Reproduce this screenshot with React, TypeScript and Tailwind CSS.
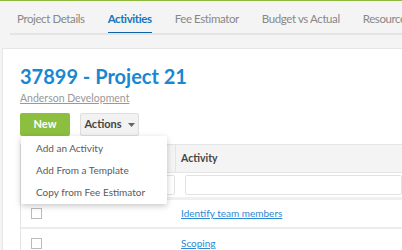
import React from "react";

export default function App() {
  const tabs = ["Project Details", "Activities", "Fee Estimator", "Budget vs Actual", "Resources"];
  return (
    <div className="w-[402px] h-[250px] overflow-hidden bg-[#f4f4f4] relative" style={{ fontFamily: "Lato, 'Liberation Sans', sans-serif" }}>
      <div className="h-[1px] bg-[#8db83a]" />
      <div className="pl-[10px] h-[47px] flex flex-col">
        <div className="flex h-[34px] border-b-2 border-[#e4e4e4] gap-[23px] pl-[7px] overflow-hidden">
          {tabs.map((t, i) => (
            <div key={t} className={`relative shrink-0 whitespace-nowrap text-[11.5px] tracking-[-0.4px] pt-[9px] ${i === 1 ? "text-[#1976b8] font-bold" : "text-[#888]"}`}>
              {t}
              {i === 1 && <div className="absolute left-0 right-0 bottom-[-2px] h-[3px] bg-[#0b65a3]" />}
            </div>
          ))}
        </div>
      </div>
      <div className="ml-[2px] bg-white border-l border-t border-[#e6e6e6] h-[202px] pl-[17px] pt-[14px] relative">
        <div className="text-[20px] leading-[26px] font-bold text-[#1a87d0]">37899 - Project 21</div>
        <div className="text-[10.5px] leading-[14px] text-[#999] underline mt-[2px]">Anderson Development</div>
        <div className="flex gap-[10px] mt-[8px] relative">
          <button className="w-[50px] h-[23px] rounded-[2px] bg-[#8cbf3f] text-white text-[11px] font-bold">New</button>
          <button className="w-[59px] h-[23px] rounded-[2px] bg-[#f2f2f2] border border-[#dedede] text-[#444] text-[11px] font-bold flex items-center justify-center gap-[6px]">
            Actions
            <svg width="7" height="4" viewBox="0 0 7 4"><path d="M0 0 L7 0 L3.5 4 Z" fill="#666" /></svg>
          </button>
          <div className="absolute left-[1px] top-[23px] w-[146px] bg-white rounded-[2px] shadow-[0_2px_6px_rgba(0,0,0,0.22)] z-10 py-[1px] text-[10px] text-[#5a5a5a]">
            <div className="h-[22px] pl-[15px] flex items-center">Add an Activity</div>
            <div className="h-[22px] pl-[15px] flex items-center">Add From a Template</div>
            <div className="h-[22px] pl-[15px] flex items-center">Copy from Fee Estimator</div>
          </div>
        </div>
        <div className="mt-[8px] border-l border-t border-[#e4e4e4]">
          <div className="flex h-[28px] bg-[#f4f4f4] border-b border-[#e4e4e4]">
            <div className="w-[155px] border-r border-[#e4e4e4]" />
            <div className="pl-[5px] flex items-center text-[10.5px] font-bold text-[#444]">Activity</div>
          </div>
          <div className="flex h-[27px] border-b-[3px] border-[#f0f0f0] items-center">
            <div className="w-[155px] flex justify-end pr-[1px]">
              <div className="w-[30px] h-[20px] border border-[#e2e2e2] rounded-[2px]" />
            </div>
            <div className="flex-1 ml-[9px] h-[20px] border border-[#e2e2e2] rounded-[2px]" />
          </div>
          <div className="flex h-[29px] border-b-2 border-[#ececec] items-center">
            <div className="w-[155px] pl-[10px]">
              <div className="w-[11px] h-[11px] border border-[#bbb]" />
            </div>
            <a className="pl-[5px] text-[10px] text-[#2a8ad4] underline">Identify team members</a>
          </div>
          <div className="flex h-[29px] items-center">
            <div className="w-[155px] pl-[10px]">
              <div className="w-[11px] h-[11px] border border-[#bbb]" />
            </div>
            <a className="pl-[5px] text-[10px] text-[#2a8ad4] underline">Scoping</a>
          </div>
        </div>
      </div>
    </div>
  );
}
